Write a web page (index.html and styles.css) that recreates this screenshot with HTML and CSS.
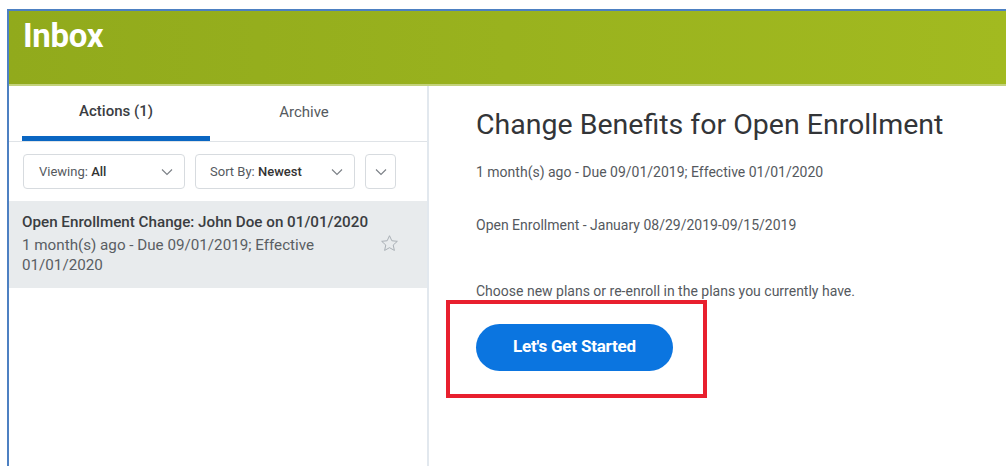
FILE: index.html
```html
<!DOCTYPE html>
<html lang="en">
<head>
<meta charset="utf-8">
<title>Inbox</title>
<link rel="stylesheet" href="styles.css">
</head>
<body>
<div class="frame">
  <header class="topbar">
    <h1 class="topbar-title">Inbox</h1>
  </header>
  <div class="main">
    <aside class="sidebar">
      <nav class="tabs">
        <div class="tab tab-active">Actions (1)</div>
        <div class="tab">Archive</div>
      </nav>
      <div class="filters">
        <div class="select select-view">
          <span class="select-label">Viewing: <b>All</b></span>
          <svg class="chev" viewBox="0 0 12 8" width="12" height="8"><path d="M1 1.5l5 5 5-5" fill="none" stroke="#7a7f85" stroke-width="1.1"/></svg>
        </div>
        <div class="select select-sort">
          <span class="select-label">Sort By: <b>Newest</b></span>
          <svg class="chev" viewBox="0 0 12 8" width="12" height="8"><path d="M1 1.5l5 5 5-5" fill="none" stroke="#7a7f85" stroke-width="1.1"/></svg>
        </div>
        <div class="select select-icon">
          <svg class="chev" viewBox="0 0 12 8" width="12" height="8"><path d="M1 1.5l5 5 5-5" fill="none" stroke="#7a7f85" stroke-width="1.1"/></svg>
        </div>
      </div>
      <div class="item">
        <div class="item-body">
          <div class="item-title">Open Enrollment Change: John Doe on 01/01/2020</div>
          <div class="item-meta">1 month(s) ago - Due 09/01/2019; Effective 01/01/2020</div>
        </div>
        <svg class="star" viewBox="0 0 20 20" width="19" height="19"><path d="M10 1.8l2.45 5.3 5.8.6-4.35 3.9 1.25 5.7L10 14.4l-5.15 2.9 1.25-5.7L1.75 7.7l5.8-.6z" fill="none" stroke="#a7adb3" stroke-width="1" stroke-linejoin="round"/></svg>
      </div>
    </aside>
    <section class="detail">
      <h2 class="detail-title">Change Benefits for Open Enrollment</h2>
      <p class="detail-meta">1 month(s) ago - Due 09/01/2019; Effective 01/01/2020</p>
      <p class="detail-event">Open Enrollment - January 08/29/2019-09/15/2019</p>
      <p class="detail-desc">Choose new plans or re-enroll in the plans you currently have.</p>
      <div class="highlight">
        <button class="btn-primary" type="button">Let's Get Started</button>
      </div>
    </section>
  </div>
</div>
</body>
</html>
```

FILE: styles.css
```css
* { box-sizing: border-box; }

html, body {
  margin: 0;
  padding: 0;
  height: 100%;
  background: #ffffff;
  font-family: Roboto, "Liberation Sans", Arial, sans-serif;
  color: #333333;
  overflow: hidden;
}

.frame {
  margin: 9px 0 0 7px;
  height: calc(100% - 9px);
  border-top: 2px solid #4d80c2;
  border-left: 2px solid #4d80c2;
  display: flex;
  flex-direction: column;
}

/* green page header */
.topbar {
  height: 75px;
  flex: none;
  background: linear-gradient(90deg, #91aa1c 0%, #99b21e 50%, #a2ba20 100%);
  border-bottom: 2px solid #c3d27c;
  padding: 5px 0 0 14px;
}

.topbar-title {
  margin: 0;
  color: #ffffff;
  font-size: 33px;
  font-weight: 700;
  line-height: 40px;
  letter-spacing: -0.3px;
}

.main {
  flex: 1;
  display: flex;
  min-height: 0;
}

/* left column */
.sidebar {
  width: 420px;
  flex: none;
  border-right: 2px solid #e2e8ee;
}

.tabs {
  display: flex;
  padding: 0 0 0 13px;
  border-bottom: 1px solid #dfe3e7;
  height: 56px;
}

.tab {
  width: 188px;
  text-align: center;
  font-size: 15px;
  color: #555a60;
  padding-top: 17px;
  line-height: 18px;
}

.tab-active {
  color: #3a3d42;
  font-weight: 500;
  border-bottom: 5px solid #0a66c2;
  padding-top: 16px;
}

.filters {
  display: flex;
  gap: 10px;
  padding: 12px 0 0 14px;
  height: 59px;
}

.select {
  height: 35px;
  border: 1px solid #d7dbdf;
  border-radius: 4px;
  display: flex;
  align-items: center;
  justify-content: space-between;
  padding: 0 11px 0 15px;
  font-size: 13px;
  color: #55595e;
}

.select b {
  font-weight: 500;
  color: #333;
}

.select-view { width: 162px; }
.select-sort { width: 160px; padding-left: 14px; }
.select-icon { width: 31px; padding: 0; justify-content: center; }

.item {
  background: #e8ebed;
  display: flex;
  align-items: flex-start;
  padding: 11px 28px 13px 13px;
  height: 87px;
}

.item-body { flex: 1; }

.item-title {
  font-size: 15.2px;
  font-weight: 500;
  color: #3a3d41;
  line-height: 20px;
}

.item-meta {
  font-size: 15.2px;
  color: #5a5e63;
  line-height: 20px;
  margin-top: 3px;
  padding-right: 40px;
}

.star {
  margin-top: 22px;
}

/* right column */
.detail {
  flex: 1;
  padding: 20px 0 0 47px;
}

.detail-title {
  margin: 0;
  font-size: 28.5px;
  font-weight: 400;
  color: #333538;
  line-height: 38px;
}

.detail-meta,
.detail-event,
.detail-desc {
  margin: 0;
  font-size: 14px;
  color: #55595e;
  line-height: 18px;
}

.detail-meta { margin-top: 19px; }
.detail-event { margin-top: 35px; }
.detail-desc { margin-top: 48px; }

.highlight {
  margin: 0 0 0 -30px;
  width: 261px;
  height: 98px;
  border: 4px solid #e8202e;
  padding: 20px 0 0 26px;
}

.btn-primary {
  width: 197px;
  height: 47px;
  border: none;
  border-radius: 24px;
  background: #0b75e0;
  color: #ffffff;
  font-family: Roboto, "Liberation Sans", Arial, sans-serif;
  font-size: 17px;
  font-weight: 700;
  letter-spacing: -0.2px;
  line-height: 20px;
  padding: 0 0 3px;
  cursor: pointer;
}
```
